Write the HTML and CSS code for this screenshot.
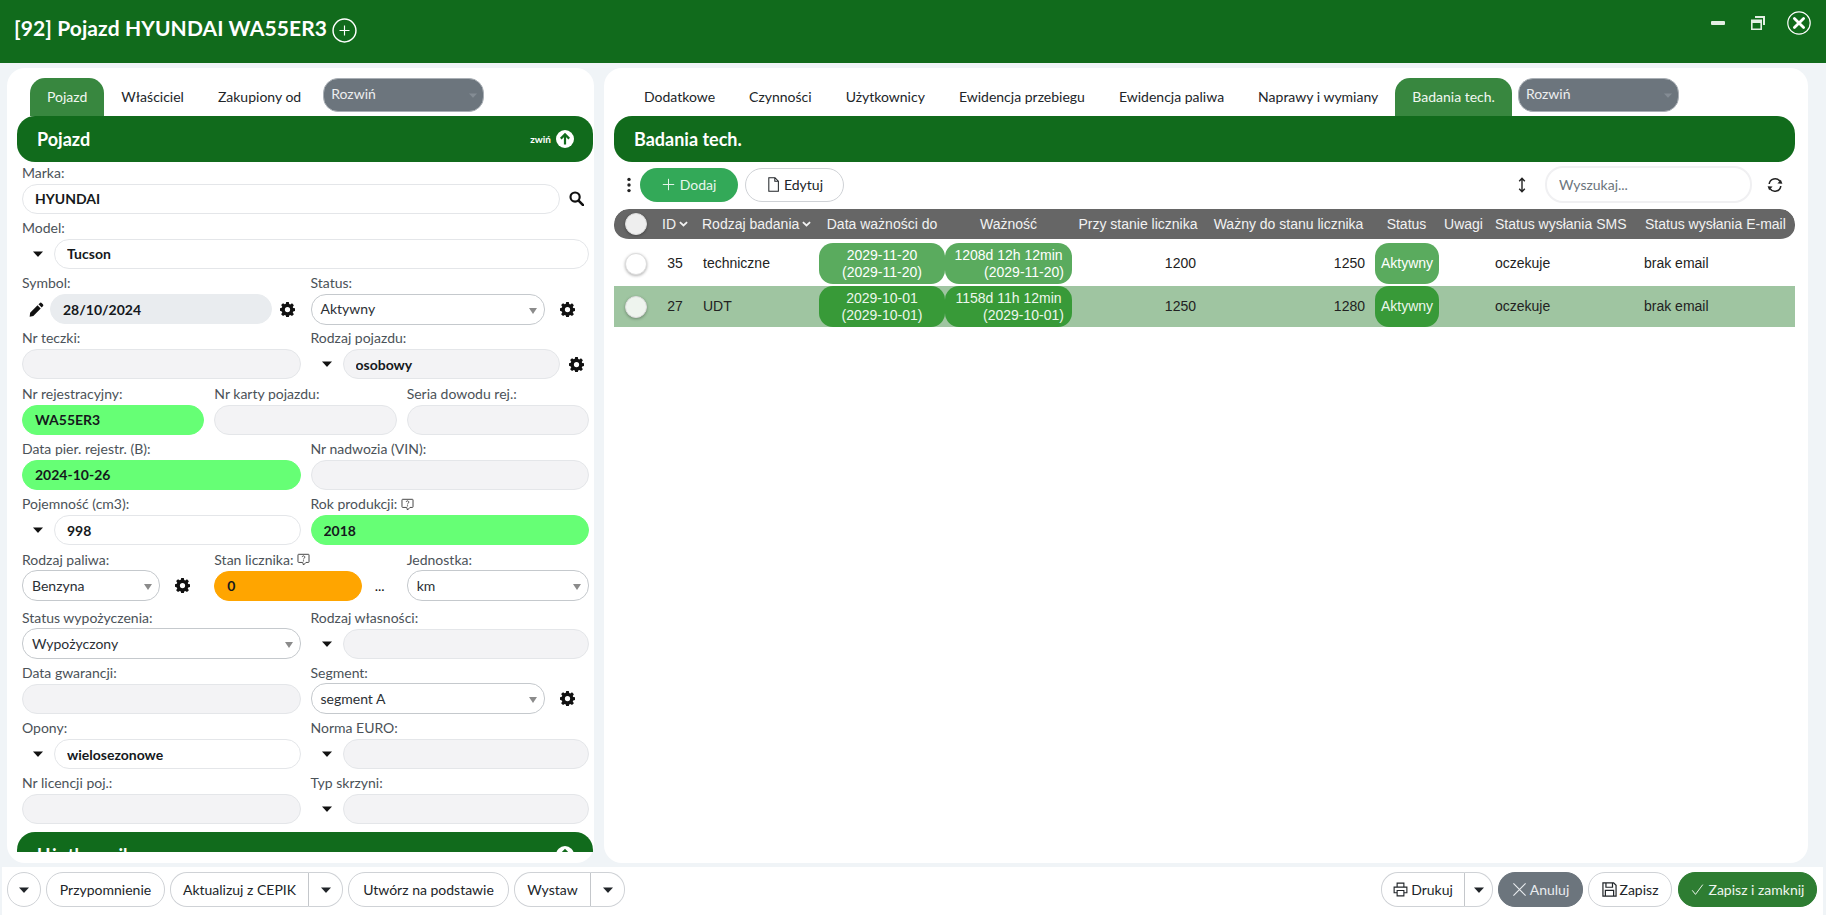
FILE: index.html
```html
<!DOCTYPE html>
<html lang="pl">
<head>
<meta charset="utf-8">
<title>[92] Pojazd HYUNDAI WA55ER3</title>
<link rel="stylesheet" href="styles.css">
</head>
<body>
<svg class="sprite" xmlns="http://www.w3.org/2000/svg">
  <symbol id="i-gear" viewBox="0 0 16 16"><path fill="currentColor" fill-rule="evenodd" d="M6.6 0h2.8l.4 2.1 1.2.5 1.8-1.2 2 2-1.2 1.8.5 1.2 2.1.4v2.8l-2.1.4-.5 1.2 1.2 1.8-2 2-1.8-1.2-1.2.5-.4 2.1H6.6l-.4-2.1-1.2-.5-1.8 1.2-2-2 1.2-1.8-.5-1.2L-.2 9.4V6.6l2.1-.4.5-1.2-1.2-1.8 2-2L5 2.4l1.2-.5zM8 5.2a2.8 2.8 0 1 0 0 5.6 2.8 2.8 0 0 0 0-5.6z"/></symbol>
  <symbol id="i-search" viewBox="0 0 16 16"><circle cx="6.5" cy="6.5" r="4.9" fill="none" stroke="currentColor" stroke-width="2.3"/><path d="M10.2 10.2L15 15" stroke="currentColor" stroke-width="2.8" stroke-linecap="round"/></symbol>
  <symbol id="i-pencil" viewBox="0 0 16 16"><path fill="currentColor" d="M11.4 1.2a1.6 1.6 0 0 1 2.3 0l1.1 1.1a1.6 1.6 0 0 1 0 2.3l-1.3 1.3-3.4-3.4zM9.1 3.5l3.4 3.4-7.9 7.9-3.9.9.5-4.3z"/></symbol>
  <symbol id="i-caret" viewBox="0 0 10 6"><path fill="currentColor" d="M0 .4h10L5.4 5.6a.6.6 0 0 1-.8 0z"/></symbol>
  <symbol id="i-hint" viewBox="0 0 16 16"><path fill="none" stroke="currentColor" stroke-width="1.2" d="M2 1.6h12a.8.8 0 0 1 .8.8v8.4a.8.8 0 0 1-.8.8h-3l-3 3.2-1-3.2H2a.8.8 0 0 1-.8-.8V2.4a.8.8 0 0 1 .8-.8z"/><path fill="none" stroke="currentColor" stroke-width="1.2" d="M6.4 5a1.6 1.6 0 1 1 2.4 1.5c-.6.4-.8.6-.8 1.3"/><circle cx="8" cy="9.6" r=".8" fill="currentColor"/></symbol>
  <symbol id="i-file" viewBox="0 0 16 16"><path fill="none" stroke="currentColor" stroke-width="1.1" d="M3 .8h6.6L13.2 4.4v10.8H3zM9.4 .8v3.8h3.8"/></symbol>
  <symbol id="i-kebab" viewBox="0 0 4 16"><circle cx="2" cy="2.4" r="1.7" fill="currentColor"/><circle cx="2" cy="8" r="1.7" fill="currentColor"/><circle cx="2" cy="13.6" r="1.7" fill="currentColor"/></symbol>
  <symbol id="i-sort" viewBox="0 0 8 16"><path fill="none" stroke="currentColor" stroke-width="1.4" d="M4 1.5v13M1.2 4.2L4 1.3l2.8 2.9M1.2 11.8L4 14.7l2.8-2.9"/></symbol>
  <symbol id="i-refresh" viewBox="0 0 16 16"><path fill="none" stroke="currentColor" stroke-width="1.5" d="M2.2 7A5.9 5.9 0 0 1 13 4.4M13.8 9A5.9 5.9 0 0 1 3 11.6"/><path fill="currentColor" d="M15.4 6.8l-5-.4 3.5-3.6zM.6 9.2l5 .4-3.5 3.6z"/></symbol>
  <symbol id="i-print" viewBox="0 0 16 16"><path fill="none" stroke="currentColor" stroke-width="1.2" d="M4.4 5.4V1.2h7.2v4.2M4.4 11.4H1.2V5.4h13.6v6h-3.2M4.4 9h7.2v5.8H4.4z"/></symbol>
  <symbol id="i-save" viewBox="0 0 16 16"><path fill="none" stroke="currentColor" stroke-width="1.3" d="M1 1h11.4L15 3.6V15H1zM4.2 1v4.6h7V1M3.6 15V9h8.8v6"/></symbol>
  <symbol id="i-x" viewBox="0 0 16 16"><path fill="none" stroke="currentColor" stroke-width="1.2" d="M1.5 1.5l13 13M14.5 1.5l-13 13"/></symbol>
  <symbol id="i-check" viewBox="0 0 16 16"><path fill="none" stroke="currentColor" stroke-width="1.2" d="M1.5 9l4 5L14.5 2"/></symbol>
  <symbol id="i-plus" viewBox="0 0 16 16"><path fill="none" stroke="currentColor" stroke-width="1.2" d="M8 1v14M1 8h14"/></symbol>
  <symbol id="i-chev" viewBox="0 0 10 6"><path fill="none" stroke="currentColor" stroke-width="2" d="M1 1l4 3.6L9 1"/></symbol>
  <symbol id="i-up" viewBox="0 0 18 18"><circle cx="9" cy="9" r="9" fill="#fff"/><path fill="none" stroke="#116b1c" stroke-width="2.2" d="M9 14.5V4.6M4.8 8.6L9 4.4l4.2 4.2"/></symbol>
</svg>

<header class="topbar">
  <h1 class="title">[92] Pojazd HYUNDAI WA55ER3</h1>
  <svg class="title-add" viewBox="0 0 24 24"><circle cx="12" cy="12" r="11" fill="none" stroke="#fff" stroke-width="1.4"/><path d="M12 7.2v9.6M7.2 12h9.6" stroke="#fff" stroke-width="1.1"/></svg>
  <div class="win-actions">
    <span class="win-min"></span>
    <svg class="win-restore" viewBox="0 0 14 14"><path fill="#e4efe4" fill-rule="evenodd" d="M4 0h10v9h-2V2H4z"/><path fill="#e4efe4" fill-rule="evenodd" d="M0 3.5h11V14H0zM1.6 7v5.4h7.8V7z"/></svg>
    <svg class="win-close" viewBox="0 0 24 24"><circle cx="12" cy="12" r="11.2" fill="none" stroke="#fff" stroke-width="1.2"/><path d="M7.4 7.4l9.2 9.2M16.6 7.4l-9.2 9.2" stroke="#fff" stroke-width="2.8" stroke-linecap="round"/></svg>
  </div>
</header>

<main class="workspace">
  <section class="card card-left">
    <nav class="tabs">
      <a class="tab active">Pojazd</a>
      <a class="tab">Właściciel</a>
      <a class="tab">Zakupiony od</a>
      <div class="more"><span>Rozwiń</span><svg class="more-arrow"><use href="#i-caret"/></svg></div>
    </nav>
    <div class="scroller">
      <div class="panel-head">
        <h2>Pojazd</h2>
        <span class="collapse">zwiń<svg class="collapse-ic"><use href="#i-up"/></svg></span>
      </div>
      <form class="form">
        <div class="row cols-1">
          <div class="f"><label>Marka:</label><div class="ctl"><input class="in" value="HYUNDAI"><span class="suf"><svg class="ic-15"><use href="#i-search"/></svg></span></div></div>
        </div>
        <div class="row cols-1">
          <div class="f"><label>Model:</label><div class="ctl"><span class="pre"><svg class="ic-caret"><use href="#i-caret"/></svg></span><input class="in" value="Tucson"></div></div>
        </div>
        <div class="row cols-2">
          <div class="f"><label>Symbol:</label><div class="ctl"><span class="pre pre-s"><svg class="ic-15"><use href="#i-pencil"/></svg></span><input class="in ro" value="28/10/2024"><span class="suf"><svg class="ic-15"><use href="#i-gear"/></svg></span></div></div>
          <div class="f"><label>Status:</label><div class="ctl"><div class="sel"><span>Aktywny</span></div><span class="suf suf-w"><svg class="ic-15"><use href="#i-gear"/></svg></span></div></div>
        </div>
        <div class="row cols-2">
          <div class="f"><label>Nr teczki:</label><div class="ctl"><input class="in off"></div></div>
          <div class="f"><label>Rodzaj pojazdu:</label><div class="ctl"><span class="pre"><svg class="ic-caret"><use href="#i-caret"/></svg></span><input class="in off" value="osobowy"><span class="suf"><svg class="ic-15"><use href="#i-gear"/></svg></span></div></div>
        </div>
        <div class="row cols-3">
          <div class="f"><label>Nr rejestracyjny:</label><div class="ctl"><input class="in ok" value="WA55ER3"></div></div>
          <div class="f"><label>Nr karty pojazdu:</label><div class="ctl"><input class="in off"></div></div>
          <div class="f"><label>Seria dowodu rej.:</label><div class="ctl"><input class="in off"></div></div>
        </div>
        <div class="row cols-2">
          <div class="f"><label>Data pier. rejestr. (B):</label><div class="ctl"><input class="in ok" value="2024-10-26"></div></div>
          <div class="f"><label>Nr nadwozia (VIN):</label><div class="ctl"><input class="in off"></div></div>
        </div>
        <div class="row cols-2">
          <div class="f"><label>Pojemność (cm3):</label><div class="ctl"><span class="pre"><svg class="ic-caret"><use href="#i-caret"/></svg></span><input class="in" value="998"></div></div>
          <div class="f"><label>Rok produkcji: <svg class="ic-hint"><use href="#i-hint"/></svg></label><div class="ctl"><input class="in ok" value="2018"></div></div>
        </div>
        <div class="row cols-3 row-tall">
          <div class="f"><label>Rodzaj paliwa:</label><div class="ctl"><div class="sel"><span>Benzyna</span></div><span class="suf suf-p"><svg class="ic-15"><use href="#i-gear"/></svg></span></div></div>
          <div class="f"><label>Stan licznika: <svg class="ic-hint"><use href="#i-hint"/></svg></label><div class="ctl"><input class="in warn" value="0"><span class="suf suf-d">...</span></div></div>
          <div class="f"><label>Jednostka:</label><div class="ctl"><div class="sel"><span>km</span></div></div></div>
        </div>
        <div class="row cols-2">
          <div class="f"><label>Status wypożyczenia:</label><div class="ctl"><div class="sel"><span>Wypożyczony</span></div></div></div>
          <div class="f"><label>Rodzaj własności:</label><div class="ctl"><span class="pre"><svg class="ic-caret"><use href="#i-caret"/></svg></span><input class="in off"></div></div>
        </div>
        <div class="row cols-2">
          <div class="f"><label>Data gwarancji:</label><div class="ctl"><input class="in off"></div></div>
          <div class="f"><label>Segment:</label><div class="ctl"><div class="sel"><span>segment A</span></div><span class="suf suf-w"><svg class="ic-15"><use href="#i-gear"/></svg></span></div></div>
        </div>
        <div class="row cols-2">
          <div class="f"><label>Opony:</label><div class="ctl"><span class="pre"><svg class="ic-caret"><use href="#i-caret"/></svg></span><input class="in" value="wielosezonowe"></div></div>
          <div class="f"><label>Norma EURO:</label><div class="ctl"><span class="pre"><svg class="ic-caret"><use href="#i-caret"/></svg></span><input class="in off"></div></div>
        </div>
        <div class="row cols-2">
          <div class="f"><label>Nr licencji poj.:</label><div class="ctl"><input class="in off"></div></div>
          <div class="f"><label>Typ skrzyni:</label><div class="ctl"><span class="pre"><svg class="ic-caret"><use href="#i-caret"/></svg></span><input class="in off"></div></div>
        </div>
      </form>
      <div class="panel-head panel-next">
        <h2>Użytkownik</h2>
        <span class="collapse">zwiń<svg class="collapse-ic"><use href="#i-up"/></svg></span>
      </div>
    </div>
  </section>

  <section class="card card-right">
    <nav class="tabs">
      <a class="tab">Dodatkowe</a>
      <a class="tab">Czynności</a>
      <a class="tab">Użytkownicy</a>
      <a class="tab">Ewidencja przebiegu</a>
      <a class="tab">Ewidencja paliwa</a>
      <a class="tab">Naprawy i wymiany</a>
      <a class="tab active">Badania tech.</a>
      <div class="more"><span>Rozwiń</span><svg class="more-arrow"><use href="#i-caret"/></svg></div>
    </nav>
    <div class="panel-head panel-wide"><h2>Badania tech.</h2></div>
    <div class="toolbar">
      <svg class="ic-kebab"><use href="#i-kebab"/></svg>
      <button class="btn btn-add" type="button"><svg class="ic-13"><use href="#i-plus"/></svg>Dodaj</button>
      <button class="btn btn-edit" type="button"><svg class="ic-15"><use href="#i-file"/></svg>Edytuj</button>
      <svg class="ic-sort"><use href="#i-sort"/></svg>
      <input class="search" placeholder="Wyszukaj...">
      <svg class="ic-refresh"><use href="#i-refresh"/></svg>
    </div>
    <table class="grid">
      <colgroup>
        <col class="c-check"><col class="c-id"><col class="c-type"><col class="c-date"><col class="c-valid"><col class="c-at"><col class="c-to"><col class="c-status"><col class="c-note"><col class="c-sms"><col class="c-mail">
      </colgroup>
      <thead>
        <tr>
          <th class="check"><span class="dot"></span></th>
          <th class="left">ID<svg class="ic-chev"><use href="#i-chev"/></svg></th>
          <th class="left">Rodzaj badania<svg class="ic-chev"><use href="#i-chev"/></svg></th>
          <th>Data ważności do</th>
          <th>Ważność</th>
          <th>Przy stanie licznika</th>
          <th>Ważny do stanu licznika</th>
          <th>Status</th>
          <th>Uwagi</th>
          <th class="left">Status wysłania SMS</th>
          <th class="left">Status wysłania E-mail</th>
        </tr>
      </thead>
      <tbody>
        <tr>
          <td class="check"><span class="dot"></span></td>
          <td class="id">35</td>
          <td>techniczne</td>
          <td class="p"><div class="pill"><span>2029-11-20</span><span>(2029-11-20)</span></div></td>
          <td class="p"><div class="pill"><span>1208d 12h 12min</span><span class="end">(2029-11-20)</span></div></td>
          <td class="num">1200</td>
          <td class="num">1250</td>
          <td class="p"><div class="pill pill-s">Aktywny</div></td>
          <td></td>
          <td>oczekuje</td>
          <td>brak email</td>
        </tr>
        <tr class="sel-row">
          <td class="check"><span class="dot"></span></td>
          <td class="id">27</td>
          <td>UDT</td>
          <td class="p"><div class="pill"><span>2029-10-01</span><span>(2029-10-01)</span></div></td>
          <td class="p"><div class="pill"><span>1158d 11h 12min</span><span class="end">(2029-10-01)</span></div></td>
          <td class="num">1250</td>
          <td class="num">1280</td>
          <td class="p"><div class="pill pill-s">Aktywny</div></td>
          <td></td>
          <td>oczekuje</td>
          <td>brak email</td>
        </tr>
      </tbody>
    </table>
  </section>
</main>

<footer class="actions">
  <button class="btn-o b-caret" type="button"><svg class="ic-caret"><use href="#i-caret"/></svg></button>
  <button class="btn-o b-rem" type="button">Przypomnienie</button>
  <div class="split s-cepik"><button class="btn-o" type="button">Aktualizuj z CEPIK</button><button class="btn-o" type="button"><svg class="ic-caret"><use href="#i-caret"/></svg></button></div>
  <button class="btn-o b-create" type="button">Utwórz na podstawie</button>
  <div class="split s-issue"><button class="btn-o" type="button">Wystaw</button><button class="btn-o" type="button"><svg class="ic-caret"><use href="#i-caret"/></svg></button></div>
  <div class="split s-print"><button class="btn-o" type="button"><svg class="ic-15"><use href="#i-print"/></svg>Drukuj</button><button class="btn-o" type="button"><svg class="ic-caret"><use href="#i-caret"/></svg></button></div>
  <button class="btn-o b-cancel" type="button"><svg class="ic-15"><use href="#i-x"/></svg>Anuluj</button>
  <button class="btn-o b-save" type="button"><svg class="ic-15"><use href="#i-save"/></svg>Zapisz</button>
  <button class="btn-o b-close" type="button"><svg class="ic-13"><use href="#i-check"/></svg>Zapisz i zamknij</button>
</footer>
</body>
</html>
```
FILE: styles.css
```css
* { box-sizing: border-box; }
html, body { height: 100%; }
body {
  margin: 0;
  height: 915px;
  overflow: hidden;
  display: flex;
  flex-direction: column;
  background: #f0f4f7;
  color: #212529;
  font: 14px/20px Lato, "Noto Sans", sans-serif;
}
.sprite { display: none; }
svg { display: block; flex: none; }

/* top bar */
.topbar {
  height: 63px;
  flex: none;
  background: #116b1c;
  color: #fff;
  display: flex;
  align-items: flex-start;
  padding: 13px 15px 0 14px;
}
.title { margin: 0; font-size: 21px; line-height: 30px; font-weight: 700; letter-spacing: 0.1px; }
.title-add { width: 25px; height: 25px; margin: 5px 0 0 5px; }
.win-actions { margin-left: auto; display: flex; align-items: center; height: 24px; margin-top: -2px; }
.win-min { width: 14px; height: 4px; border-radius: 1px; background: #e4efe4; margin-right: 26px; }
.win-restore { width: 14px; height: 14px; margin-right: 22px; }
.win-close { width: 24px; height: 24px; }

/* workspace */
.workspace { flex: 1; min-height: 0; display: flex; gap: 10px; padding: 5px 18px 4px 7px; }
.card { background: #fff; border-radius: 18px; padding: 10px 0 11px 10px; display: flex; flex-direction: column; min-width: 0; }
.card-left { width: 587px; flex: none; padding-right: 1px; }
.card-right { flex: 1; padding-right: 13px; padding-bottom: 0; }

/* tabs */
.tabs { height: 38px; flex: none; display: flex; padding-left: 13px; }
.tab { padding: 0 17px; height: 38px; line-height: 38px; white-space: nowrap; color: #212529; }
.tab.active { background: #38873f; color: #f1f7f1; border-radius: 15px 15px 0 0; }
.more {
  width: 161px; height: 34px; margin-left: 6px;
  background: #6c757d; border: 1.5px solid #a9afb5; border-radius: 15px;
  color: #eceeef; display: flex; align-items: center; justify-content: space-between;
  padding: 0 6px 2px 7px;
}
.card-left .more { margin-left: 5px; }
.more-arrow { width: 8px; height: 5px; color: #848c94; margin-top: 3px; }

/* panels */
.scroller { flex: 1; min-height: 0; overflow-y: scroll; padding-right: 0; }
.scroller::-webkit-scrollbar { width: 13px; }
.scroller::-webkit-scrollbar-track { background: transparent; }
.scroller::-webkit-scrollbar-thumb { background: #999; border-radius: 8px; }
.panel-head {
  height: 46px; background: #116b1c; color: #fff; border-radius: 18px;
  display: flex; align-items: center; justify-content: space-between;
  padding: 0 19px 0 20px;
}
.panel-head h2 { margin: 0; font-size: 18px; font-weight: 700; line-height: 24px; }
.panel-next { margin-top: 4px; margin-bottom: 190px; }
.collapse { display: flex; align-items: center; gap: 5px; font-size: 10px; font-weight: 700; }
.collapse-ic { width: 18px; height: 18px; }

/* form */
.form { padding: 0 4px 0 5px; }
.row { display: grid; column-gap: 10px; height: 55.3px; }
.row-tall { height: 58px; }
.cols-1 { grid-template-columns: 1fr; }
.cols-2 { grid-template-columns: 1fr 1fr; }
.cols-3 { grid-template-columns: 1fr 1fr 1fr; }
.f { min-width: 0; }
.f label { display: flex; align-items: center; gap: 4px; height: 21px; color: #4b5258; white-space: nowrap; }
.ctl { display: flex; align-items: center; height: 31px; }
.in {
  flex: 1; min-width: 0; width: 100%; height: 30px;
  border: 1px solid #e4e6e9; border-radius: 15px; background: #fff;
  padding: 0 12px; font: 700 14px Lato, "Noto Sans", sans-serif; color: #15191c; outline: none;
}
.in.ro { background: #e9ecef; border-color: #e9ecef; }
.in.off { background: #f3f3f5; }
.in.ok { background: #66ff75; border-color: #66ff75; }
.in.warn { background: #ffa500; border-color: #ffa500; }
.pre { width: 32px; flex: none; display: flex; justify-content: center; color: #111; }
.pre-s { width: 28px; }
.suf { width: 29px; flex: none; display: flex; justify-content: center; padding-left: 3px; color: #111; }
.suf-w { width: 44px; padding-left: 0; }
.suf-p { width: 44px; padding-left: 0; }
.suf-d { width: 35px; padding: 0 0 0 1px; letter-spacing: 0; }
.sel {
  flex: 1; min-width: 0; height: 31px; position: relative;
  border: 1px solid #c5c9cd; border-radius: 15px; background: #fff;
  padding: 0 9px; display: flex; align-items: center; color: #2b3035;
}
.sel::after {
  content: ""; position: absolute; right: 7px; top: 13px;
  border-left: 4px solid transparent; border-right: 4px solid transparent; border-top: 6px solid #8b8b8b;
}
.ic-15 { width: 15px; height: 15px; }
.ic-13 { width: 13px; height: 13px; }
.ic-caret { width: 10px; height: 6px; }
.ic-hint { width: 13px; height: 13px; color: #444; }

/* right pane */
.panel-wide { flex: none; }
.toolbar { height: 37px; margin-top: 4px; flex: none; display: flex; align-items: center; padding-left: 13px; }
.ic-kebab { width: 4px; height: 16px; margin-right: 9px; color: #222; }
.btn {
  height: 34px; border-radius: 17px; font: 14px Lato, "Noto Sans", sans-serif;
  display: flex; align-items: center; justify-content: center; gap: 3px; padding: 0;
}
.btn-add { width: 98px; background: #33a958; border: 0; color: #e7f6ec; gap: 5px; }
.btn-edit { width: 99px; margin-left: 7px; background: #fff; border: 1px solid #cfd2d6; color: #212529; }
.ic-sort { width: 8px; height: 16px; margin-left: auto; color: #222; }
.search {
  width: 207px; height: 37px; margin-left: 19px;
  border: 2px solid #f0f0f2; border-radius: 18px; padding: 0 12px;
  font: 14px Lato, "Noto Sans", sans-serif; outline: none;
}
.search::placeholder { color: #6c757d; }
.ic-refresh { width: 16px; height: 16px; margin: 0 12px 0 15px; color: #222; }

.grid {
  width: 1181px; margin-top: 4px; table-layout: fixed;
  border-collapse: separate; border-spacing: 0 2px;
  font: 14px/17px "Liberation Sans", Arial, sans-serif;
  color: #222;
}
.c-check { width: 41px; } .c-id { width: 40px; } .c-type { width: 124px; } .c-date { width: 126px; }
.c-valid { width: 127px; } .c-at { width: 132px; } .c-to { width: 169px; } .c-status { width: 67px; }
.c-note { width: 47px; } .c-sms { width: 149px; } .c-mail { width: 159px; }
.grid th {
  height: 32px; padding: 0; font-weight: 400; color: #f2f2f2; text-align: center; white-space: nowrap;
  background: #666; background-clip: padding-box; border-bottom: 2px solid transparent;
}
.grid th.left { text-align: left; padding-left: 7px; }
.grid th:first-child { border-radius: 15px 0 0 15px; }
.grid th:last-child { border-radius: 0 15px 15px 0; padding-left: 9px; }
.grid th:nth-child(10) { padding-left: 8px; }
.ic-chev { display: inline-block; width: 9px; height: 6px; margin-left: 3px; vertical-align: 2px; }
.grid td { height: 41px; padding: 0 0 0 8px; white-space: nowrap; }
.grid td.id { text-align: center; padding: 0; }
.grid td.num { text-align: right; padding: 0 8px 0 0; }
.grid td.p { padding: 0; }
.grid td.check, .grid th.check { padding: 0 0 0 11px; text-align: left; }
.sel-row td { background: #9fc5a1; }
.dot {
  display: block; width: 22px; height: 22px; border-radius: 50%;
  background: #fff; border: 1px solid #ddd; box-shadow: 0 1px 3px rgba(0,0,0,.3);
}
.grid th .dot { background: #eee; }
.sel-row .dot { background: #eef4ee; }
.pill {
  height: 41px; border-radius: 14px; background: #5aab5e; color: #fff;
  display: flex; flex-direction: column; justify-content: center; align-items: center;
  padding: 0 8px;
}
.sel-row .pill { background: #389a38; color: #ecf7ec; }
.pill .end { align-self: flex-end; }
.pill-s { margin: 0 1px 0 2px; padding: 0; }

/* footer */
.actions {
  flex: none; height: 48px; margin: 0 3px 0 2px; background: #fff;
  display: flex; align-items: flex-start; gap: 5px; padding: 5px 6px 0 5px;
}
.btn-o {
  height: 35px; border: 1px solid #cfd2d6; border-radius: 17px; background: #fff; color: #212529;
  font: 14px Lato, "Noto Sans", sans-serif; padding: 0;
  display: flex; align-items: center; justify-content: center; gap: 3px;
}
.b-caret { width: 34px; }
.b-rem { width: 119px; }
.b-create { width: 161px; }
.split { display: flex; }
.split .btn-o:first-child { border-radius: 17px 0 0 17px; flex: 1; }
.split .btn-o:last-child { border-radius: 0 17px 17px 0; border-left: 0; width: 34px; }
.split .btn-o:first-child { border-right-color: #c4c7cb; }
.s-cepik { width: 173px; }
.s-issue { width: 111px; }
.s-print { width: 112px; margin-left: auto; }
.s-print .btn-o:last-child { width: 28px; }
.b-cancel { width: 85px; background: #6c757d; border-color: #6c757d; color: #e9ecef; }
.b-save { width: 84px; }
.b-close { width: 139px; margin-left: 1px; background: #2e7d32; border-color: #2e7d32; color: #eef6ee; gap: 5px; }
```
